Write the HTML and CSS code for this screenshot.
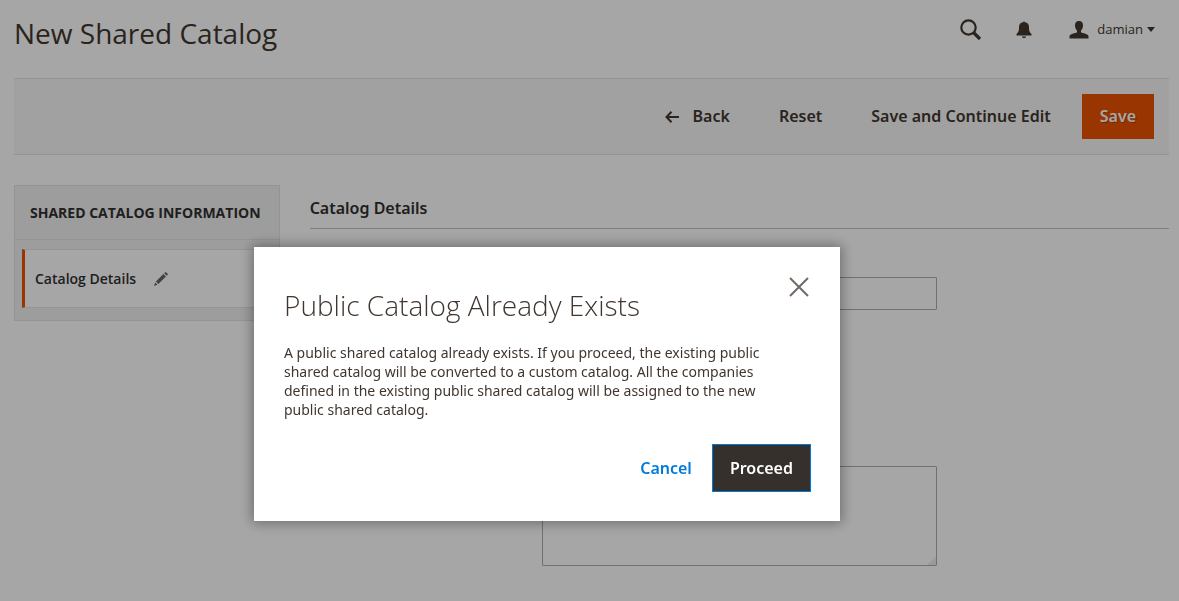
FILE: index.html
```
<!DOCTYPE html>
<html lang="en">
<head>
<meta charset="utf-8">
<meta name="viewport" content="width=device-width, initial-scale=1">
<title>New Shared Catalog</title>
<link rel="stylesheet" href="styles.css">
</head>
<body>
<div class="page">
  <header class="page-header">
    <h1 class="page-title">New Shared Catalog</h1>
    <div class="header-tools">
      <button class="tool" type="button" aria-label="Search">
        <svg width="22" height="22" viewBox="0 0 22 22" fill="none" stroke="currentColor"><circle cx="8.500" cy="8.500" r="7.200" stroke-width="2.200"/><path d="M13.500 13.500L20 20" stroke-width="3.200"/></svg>
      </button>
      <button class="tool" type="button" aria-label="Notifications">
        <svg width="16" height="18" viewBox="0 0 16 18" fill="currentColor"><path d="M7 1.200C7 .3 9 .3 9 1.200C11.700 1.600 13 3.500 13 6C13 10 13.500 11.200 15.500 13V14.500H.5V13C2.500 11.200 3 10 3 6C3 3.500 4.300 1.600 7 1.200ZM6 15.500H10C10 17.500 6 17.500 6 15.500Z"/></svg>
      </button>
      <button class="tool account" type="button">
        <svg width="20" height="18" viewBox="0 0 20 18" fill="currentColor"><path d="M10 0C12.800 0 14 1.700 14 4.200C14 6.500 13.300 8.300 12 9.500V11.200C13.500 12.300 19.500 12.700 19.500 15.500V17.500H.5V15.500C.5 12.700 6.500 12.300 8 11.200V9.500C6.700 8.300 6 6.500 6 4.200C6 1.700 7.200 0 10 0Z"/></svg>
        <span class="account-name">damian
          <svg width="8" height="5" viewBox="0 0 8 5" fill="currentColor"><path d="M0 0H8L4 5Z"/></svg>
        </span>
      </button>
    </div>
  </header>

  <div class="page-actions">
    <button class="action back" type="button">
      <svg width="14" height="12" viewBox="0 0 14 12" fill="none" stroke="currentColor" stroke-width="2"><path d="M14 6H1.500M6.500 .8L1.500 6L6.500 11.200"/></svg>
      Back
    </button>
    <button class="action" type="button">Reset</button>
    <button class="action" type="button">Save and Continue Edit</button>
    <button class="action primary" type="button">Save</button>
  </div>

  <div class="columns">
    <nav class="side-nav">
      <h2 class="side-title">Shared Catalog Information</h2>
      <a class="side-link" href="#details">Catalog Details
        <svg width="14" height="14" viewBox="0 0 14 14" fill="currentColor"><path d="M0 14L1.200 10.500L3.500 12.800ZM1.900 9.600L9.400 2.100L11.900 4.600L4.400 12.100ZM10.200 1.300L11.200 .3Q11.800-.1 12.300.4L13.600 1.700Q14.100 2.200 13.700 2.800L12.700 3.800Z"/></svg>
      </a>
    </nav>
    <main class="details" id="details">
      <h2 class="section-title">Catalog Details</h2>
      <form class="fields">
        <input class="control" type="text" aria-label="Name">
        <textarea class="control description" aria-label="Description"></textarea>
      </form>
    </main>
  </div>
</div>

<div class="overlay">
  <section class="modal" role="dialog" aria-modal="true" aria-labelledby="modal-title">
    <header class="modal-header">
      <h2 class="modal-title" id="modal-title">Public Catalog Already Exists</h2>
      <button class="close" type="button" aria-label="Close">
        <svg width="20" height="20" viewBox="0 0 20 20" fill="none" stroke="currentColor" stroke-width="2"><path d="M1 1L19 19M19 1L1 19"/></svg>
      </button>
    </header>
    <p class="modal-text">A public shared catalog already exists. If you proceed, the existing public shared catalog will be converted to a custom catalog. All the companies defined in the existing public shared catalog will be assigned to the new public shared catalog.</p>
    <footer class="modal-footer">
      <button class="cancel" type="button">Cancel</button>
      <button class="proceed" type="button">Proceed</button>
    </footer>
  </section>
</div>
</body>
</html>
```
FILE: styles.css
```
* {
  box-sizing: border-box;
}

body {
  margin: 0;
  background: #fff;
  color: #41362f;
  font: 14px/19px "Open Sans", "Noto Sans", sans-serif;
}

h1, h2, p {
  margin: 0;
}

button {
  padding: 0;
  border: 0;
  background: none;
  color: inherit;
  font: inherit;
  cursor: pointer;
}

svg {
  display: block;
  flex: none;
}

.page {
  padding: 0 10px 0 14px;
}

.page-header {
  display: flex;
  justify-content: space-between;
  align-items: flex-start;
  height: 78px;
  padding: 14px 14px 0 0;
}

.page-title {
  font-size: 28px;
  font-weight: 400;
  line-height: 38px;
}

.header-tools {
  display: flex;
  align-items: center;
  gap: 34px;
  height: 32px;
}

.tool {
  display: flex;
  align-items: center;
}

.account {
  align-items: flex-start;
  gap: 8px;
  margin-left: 3px;
  font-size: 13px;
  line-height: 16px;
}

.account-name {
  display: flex;
  align-items: center;
  gap: 4px;
}

.page-actions {
  display: flex;
  justify-content: flex-end;
  align-items: center;
  gap: 13px;
  padding: 15px;
  border-top: 1px solid #e3e3e3;
  border-bottom: 1px solid #e3e3e3;
  background: #f8f8f8;
}

.action {
  display: flex;
  align-items: center;
  gap: 14px;
  height: 45px;
  padding: 0 18px;
  font-family: "Noto Sans", sans-serif;
  font-size: 16px;
  font-weight: 600;
}

.primary {
  background: #eb5202;
  color: #fff;
  text-shadow: 1px 1px 0 rgba(0, 0, 0, .25);
}

.columns {
  display: flex;
  align-items: flex-start;
  gap: 30px;
  padding-top: 30px;
}

.side-nav {
  flex: 0 0 23%;
  padding-bottom: 12px;
  border: 1px solid #e3e3e3;
  background: #f1f1f1;
}

.side-title {
  padding: 17px 15px 16px;
  border-bottom: 1px solid #e3e3e3;
  color: #303030;
  font-size: 14px;
  font-weight: 700;
  line-height: 20px;
  text-transform: uppercase;
  white-space: nowrap;
}

.side-link {
  display: flex;
  align-items: center;
  gap: 18px;
  height: 59px;
  margin: 9px 0 0 7px;
  padding-left: 10px;
  border: solid #e3e3e3;
  border-width: 1px 0;
  border-left: 3px solid #eb5202;
  background: #fff;
  color: #303030;
  font-weight: 600;
  text-decoration: none;
}

.side-link svg {
  color: #666;
}

.details {
  flex: 1;
}

.section-title {
  padding: 11px 0 8px;
  border-bottom: 1px solid #cac3b4;
  color: #303030;
  font-family: "Noto Sans", sans-serif;
  font-size: 16px;
  font-weight: 600;
  line-height: 24px;
}

.fields {
  display: flex;
  flex-direction: column;
  gap: 156px;
  padding: 48px 0 30px 27%;
}

.control {
  width: 63%;
  height: 33px;
  padding: 5px 9px;
  border: 1px solid #adadad;
  border-radius: 1px;
  background: #fff;
  color: #303030;
  font: inherit;
  outline: 0;
}

.description {
  height: 100px;
}

.description::-webkit-resizer {
  background: linear-gradient(135deg, transparent 50%, #ededed 50%) right bottom / 9px 9px no-repeat;
}

.overlay {
  position: fixed;
  inset: 0;
  display: flex;
  justify-content: center;
  align-items: flex-start;
  padding: 247px 85px 0 0;
  background: rgba(0, 0, 0, .35);
}

.modal {
  flex: 0 1 586px;
  padding: 30px 29px 29px 30px;
  background: #fff;
  box-shadow: 0 0 12px 2px rgba(0, 0, 0, .35);
}

.modal-header {
  display: flex;
  justify-content: space-between;
  align-items: flex-start;
}

.modal-title {
  padding-top: 9px;
  font-size: 28px;
  font-weight: 300;
  line-height: 38px;
}

.close {
  margin-right: 2px;
  color: #736963;
}

.modal-text {
  max-width: 500px;
  padding-top: 19px;
  font-family: "Noto Sans", sans-serif;
}

.modal-footer {
  display: flex;
  justify-content: flex-end;
  align-items: center;
  gap: 20px;
  padding-top: 25px;
  font-family: "Noto Sans", sans-serif;
  font-size: 16px;
  font-weight: 600;
}

.cancel {
  color: #007bdb;
}

.proceed {
  height: 48px;
  padding: 0 17px;
  border: 1px solid #007bdb;
  background: #35302c;
  color: #fff;
}
```
